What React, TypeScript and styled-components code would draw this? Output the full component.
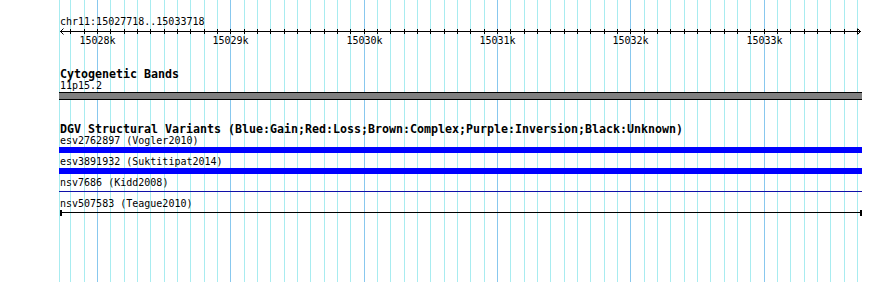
import styled, { createGlobalStyle } from "styled-components";

const GlobalStyle = createGlobalStyle`
  html, body {
    margin: 0;
    padding: 0;
    background: #ffffff;
  }
  body {
    font-family: "DejaVu Sans Mono", "Liberation Mono", monospace;
    color: #000000;
  }
`;

// region shown: chr11:15027718..15033718, drawn from x=60 over 800px
const START = 15027718;
const END = 15033718;
const X0 = 60;
const SPAN_PX = 800;
const toX = (bp: number) => X0 + ((bp - START) * SPAN_PX) / (END - START);

const minorStops: number[] = [];
for (let bp = 15027800; bp <= 15033700; bp += 100) minorStops.push(bp);

const Panel = styled.div`
  position: relative;
  width: 890px;
  height: 282px;
  overflow: hidden;
  background: #ffffff;
`;

const GridLayer = styled.svg`
  position: absolute;
  top: 0;
  left: 0;
  z-index: 0;
`;

const Tracks = styled.div`
  position: relative;
  z-index: 1;
  display: flex;
  flex-direction: column;
  width: 802px;
  padding: 16px 0 0 60px;
`;

const Track = styled.section<{ $gap: number }>`
  display: flex;
  flex-direction: column;
  margin-top: ${(p) => p.$gap}px;
`;

const TrackTitle = styled.div`
  height: 12px;
  font-size: 11.63px;
  line-height: 12px;
  font-weight: bold;
  white-space: pre;
`;

const FeatureLabel = styled.div`
  height: 11px;
  font-size: 10px;
  line-height: 11px;
  white-space: pre;
`;

const RulerSvg = styled.svg`
  display: block;
  margin-left: -60px;
`;

const FeatureRow = styled.div`
  display: flex;
  flex-direction: column;
  height: 21px;
`;

const GlyphArea = styled.div`
  display: flow-root;
  height: 10px;
`;

const Band = styled.div`
  box-sizing: border-box;
  width: 803px;
  height: 8px;
  margin: 1px 0 0 -1px;
  border-top: 1px solid #000000;
  border-bottom: 1px solid #000000;
  background: #808080;
`;

const Bar = styled.div<{ $color: string }>`
  width: 803px;
  height: 6px;
  margin: 1px 0 0 -1px;
  background: ${(p) => p.$color};
`;

const ThinLine = styled.div<{ $color: string }>`
  width: 803px;
  height: 1px;
  margin: 3px 0 0 -1px;
  background: ${(p) => p.$color};
`;

const CappedLine = styled.div`
  box-sizing: border-box;
  width: 802px;
  height: 6px;
  margin-top: 1px;
  border-left: 2px solid #000000;
  border-right: 2px solid #000000;
  background: linear-gradient(#000000, #000000) no-repeat 0 2px / 100% 1px;
`;

function Grid() {
  return (
    <GridLayer width={890} height={282} shapeRendering="crispEdges">
      <rect x={59} y={0} width={1} height={282} fill="#a8ecf0" />
      {minorStops.map((bp) => (
        <rect
          key={bp}
          x={Math.floor(toX(bp))}
          y={0}
          width={1}
          height={282}
          fill={bp % 1000 === 0 ? "#88c8ee" : "#a8ecf0"}
        />
      ))}
    </GridLayer>
  );
}

function Ruler() {
  const majors = minorStops.filter((bp) => bp % 1000 === 0);
  return (
    <RulerSvg width={890} height={20} viewBox="0 0 890 20">
      <g shapeRendering="crispEdges" fill="#000000">
        <rect x={60} y={4} width={801} height={1} />
        {minorStops.map((bp) => (
          <rect key={bp} x={Math.floor(toX(bp))} y={2} width={1} height={5} />
        ))}
      </g>
      <polyline points="63.5,1.5 60.5,4.5 63.5,7.5" fill="none" stroke="#000" strokeWidth={1} />
      <polyline points="857.5,1.5 860.5,4.5 857.5,7.5" fill="none" stroke="#000" strokeWidth={1} />
      {majors.map((bp) => (
        <text
          key={bp}
          x={Math.floor(toX(bp)) + 0.5}
          y={17.3}
          textAnchor="middle"
          fontSize={10}
          fontFamily='"DejaVu Sans Mono", "Liberation Mono", monospace'
        >
          {bp / 1000}k
        </text>
      ))}
    </RulerSvg>
  );
}

type Variant = { id: string; study: string; kind: "bar" | "line" | "capped"; color: string };

const variants: Variant[] = [
  { id: "esv2762897", study: "Vogler2010", kind: "bar", color: "#0000ff" },
  { id: "esv3891932", study: "Suktitipat2014", kind: "bar", color: "#0000ff" },
  { id: "nsv7686", study: "Kidd2008", kind: "line", color: "#1010a8" },
  { id: "nsv507583", study: "Teague2010", kind: "capped", color: "#000000" },
];

function VariantGlyph({ v }: { v: Variant }) {
  if (v.kind === "bar") return <Bar $color={v.color} />;
  if (v.kind === "line") return <ThinLine $color={v.color} />;
  return <CappedLine />;
}

export default function App() {
  return (
    <>
      <GlobalStyle />
      <Panel>
        <Grid />
        <Tracks>
          <Track $gap={0}>
            <FeatureLabel>chr11:15027718..15033718</FeatureLabel>
            <Ruler />
          </Track>

          <Track $gap={21}>
            <TrackTitle>Cytogenetic Bands</TrackTitle>
            <FeatureLabel>11p15.2</FeatureLabel>
            <GlyphArea>
              <Band />
            </GlyphArea>
          </Track>

          <Track $gap={22}>
            <TrackTitle>
              DGV Structural Variants (Blue:Gain;Red:Loss;Brown:Complex;Purple:Inversion;Black:Unknown)
            </TrackTitle>
            {variants.map((v) => (
              <FeatureRow key={v.id}>
                <FeatureLabel>
                  {v.id} ({v.study})
                </FeatureLabel>
                <GlyphArea>
                  <VariantGlyph v={v} />
                </GlyphArea>
              </FeatureRow>
            ))}
          </Track>
        </Tracks>
      </Panel>
    </>
  );
}
